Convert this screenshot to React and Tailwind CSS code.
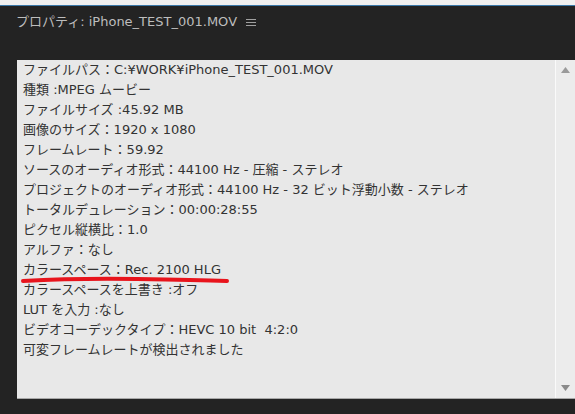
export default function App() {
  const lines = [
    "ファイルパス：C:¥WORK¥iPhone_TEST_001.MOV",
    "種類 :MPEG ムービー",
    "ファイルサイズ :45.92 MB",
    "画像のサイズ：1920 x 1080",
    "フレームレート：59.92",
    "ソースのオーディオ形式：44100 Hz - 圧縮 - ステレオ",
    "プロジェクトのオーディオ形式：44100 Hz - 32 ビット浮動小数 - ステレオ",
    "トータルデュレーション：00:00:28:55",
    "ピクセル縦横比：1.0",
    "アルファ：なし",
    "カラースペース：Rec. 2100 HLG",
    "カラースペースを上書き :オフ",
    "LUT を入力 :なし",
    "ビデオコーデックタイプ：HEVC 10 bit  4:2:0",
    "可変フレームレートが検出されました",
  ];
  return (
    <div className="w-[575px] h-[414px] bg-[#232323] flex flex-col overflow-hidden" style={{ fontFamily: '"DejaVu Sans", "Noto Sans CJK JP", sans-serif' }}>
      <div className="h-[5px] bg-[#f0f0f0]" />
      <div className="h-[1px] bg-[#3b78a8]" />
      <div className="h-[54px] flex items-start pl-[16px] pt-[8px]">
        <span className="text-[13px] leading-[16px] text-[#bdbdbd]">プロパティ: iPhone_TEST_001.MOV</span>
        <span className="ml-[9px] mt-[5px] flex flex-col gap-[2px]">
          <span className="block w-[10px] h-[1px] bg-[#a0a0a0]" />
          <span className="block w-[10px] h-[1px] bg-[#a0a0a0]" />
          <span className="block w-[10px] h-[1px] bg-[#a0a0a0]" />
        </span>
      </div>
      <div className="ml-[17px] h-[339px] bg-[#e8e8e8] border-b border-[#a8a8a8] flex">
        <div className="relative flex-1 pl-[6px] pt-0">
          {lines.map((l, i) => (
            <div key={i} className="text-[13px] leading-[20px] text-[#333333] whitespace-pre">{l}</div>
          ))}
          <svg className="absolute left-[0px] top-[213px]" width="240" height="16" viewBox="0 0 240 16">
            <path d="M6 8 Q 60 5 120 6 T 210 8" stroke="#e8141c" strokeWidth="4" fill="none" strokeLinecap="round" />
          </svg>
        </div>
        <div className="w-[20px] bg-[#ececec] border-l border-[#fafafa] flex flex-col items-center justify-between pt-[7px] pb-[7px]">
          <svg width="9" height="6" viewBox="0 0 9 6"><polygon points="4.5,0 9,6 0,6" fill="#9a9a9a" /></svg>
          <svg width="9" height="6" viewBox="0 0 9 6"><polygon points="0,0 9,0 4.5,6" fill="#8a8a8a" /></svg>
        </div>
      </div>
    </div>
  );
}
